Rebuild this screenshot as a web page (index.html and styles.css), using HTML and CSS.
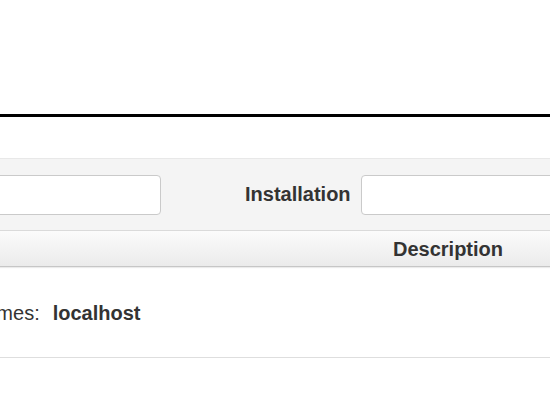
FILE: index.html
```html
<!DOCTYPE html>
<html lang="en">
<head>
  <meta charset="UTF-8">
  <title>Installations</title>
  <link rel="stylesheet" href="styles.css">
</head>
<body>
  <hr class="title-rule">

  <div class="filters">
    <input type="text" class="filter-input filter-name">
    <label for="filtreInstall" class="filter-label">Installation</label>
    <input type="text" id="filtreInstall" class="filter-input filter-install">
  </div>

  <div class="list-header">
    <span class="col-desc">Description</span>
  </div>

  <div class="list-row">
    <span class="row-key">Hostnames:</span>
    <span class="row-value">localhost</span>
  </div>
</body>
</html>
```

FILE: styles.css
```css
html {
  overflow: hidden;
}

body {
  font-family: "Liberation Sans", Arial, sans-serif;
  font-size: 20px;
  color: #333;
  background: #fff;
  margin: 0;
  padding: 0;
}

.title-rule {
  margin: 114px 0 0 0;
  height: 3px;
  border: none;
  background-color: #000;
}

.filters {
  display: flex;
  align-items: center;
  margin-top: 41px;
  height: 71px;
  background-color: #f4f4f4;
  border-top: 1px solid #e8e8e8;
  border-bottom: 1px solid #dadada;
}

.filter-input {
  flex: none;
  box-sizing: border-box;
  height: 40px;
  border: 1px solid #cacaca;
  border-radius: 4px;
  background-color: #fff;
  font-size: 16px;
}

.filter-name {
  width: 261px;
  margin-left: -100px;
}

.filter-label {
  font-weight: bold;
  margin-left: 84px;
  margin-right: 10px;
  white-space: nowrap;
}

.filter-install {
  width: 300px;
}

.list-header {
  display: flex;
  height: 23px;
  padding: 7px 0 5px 0;
  font-weight: bold;
  background: linear-gradient(#fbfbfb, #ebebeb);
  border-bottom: 1px solid #c6c6c6;
  box-shadow: 0 1px 1px rgba(0, 0, 0, 0.08);
}

.col-desc {
  margin-left: 393px;
}

.list-row {
  display: flex;
  gap: 13px;
  padding: 35px 0 32px 0;
  border-bottom: 1px solid #dedede;
}

.row-key {
  margin-left: -67px;
  white-space: nowrap;
}

.row-value {
  font-weight: bold;
}
```
